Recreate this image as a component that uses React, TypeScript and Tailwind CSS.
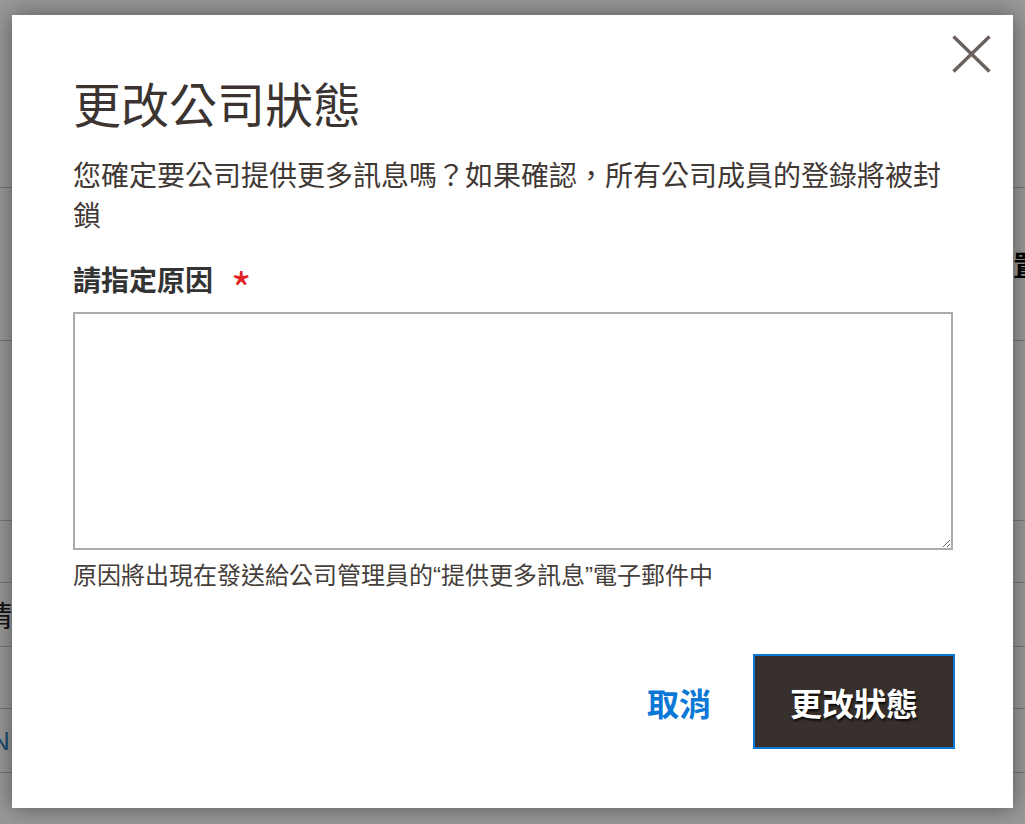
import React from "react";

export default function App() {
  return (
    <div className="relative h-[824px] w-[1025px] overflow-hidden bg-white font-['Noto_Sans_CJK_TC',sans-serif]">
      {/* background page (obscured) */}
      <div className="flex flex-col">
        <div className="h-[188px] border-b border-[#c8c8c8]" />
        <div className="flex h-[153px] items-center justify-end border-b border-[#c8c8c8]">
          <span className="mr-[-16px] text-[28px] font-bold leading-none text-black">設置</span>
        </div>
        <div className="h-[180px] border-b border-[#c8c8c8]" />
        <div className="h-[62px] border-b border-[#c8c8c8]" />
        <div className="flex h-[64px] items-center border-b border-[#c8c8c8]">
          <span className="ml-[-17px] text-[29px] leading-none text-[#222]">請</span>
        </div>
        <div className="h-[62px] border-b border-[#c8c8c8]" />
        <div className="flex h-[64px] items-center border-b border-[#c8c8c8]">
          <span className="ml-[-9px] font-['Liberation_Sans',sans-serif] text-[26px] leading-none text-[#2f84c0]">N</span>
        </div>
        <div className="h-[60px]" />
      </div>

      {/* overlay */}
      <div className="absolute inset-0 bg-black/40 pl-[12px] pt-[15px]">
        <div className="relative flex h-[793px] w-[1001px] flex-col bg-white pl-[61px] pr-[60px] pt-[58px] shadow-[0_0_22px_rgba(0,0,0,0.45)]">
          <button
            type="button"
            aria-label="close"
            className="absolute right-[22px] top-[20px] flex h-[38px] w-[39px] items-center justify-center"
          >
            <svg width="39" height="38" viewBox="0 0 39 38" fill="none">
              <path d="M1.5 1.5 L37.5 36.5 M37.5 1.5 L1.5 36.5" stroke="#6a615c" strokeWidth="3.4" strokeLinecap="butt" />
            </svg>
          </button>

          <h1 className="text-[48px] font-normal leading-[58px] text-[#3b3430]">更改公司狀態</h1>

          <p className="mt-[23px] text-[28px] leading-[40px] text-[#3f3834]">
            您確定要公司提供更多訊息嗎？如果確認，所有公司成員的登錄將被封鎖
          </p>

          <div className="mt-[25px] flex h-[40px] items-center text-[28px] leading-[40px]">
            <span className="font-bold text-[#333333]">請指定原因</span>
            <span className="ml-[18px] translate-y-[8px] text-[44px] leading-[40px] text-[#e02424]">*</span>
          </div>

          <textarea className="mt-[13px] h-[238px] w-[880px] border-2 border-[#ababab] bg-white p-2 text-[24px] outline-none" />

          <p className="mt-[9px] font-['Liberation_Sans','Noto_Sans_CJK_TC',sans-serif] text-[24px] leading-[34px] text-[#453e3a]">
            原因將出現在發送給公司管理員的“提供更多訊息”電子郵件中
          </p>

          <div className="mr-[-2px] mt-[61px] flex items-center justify-end gap-[42px]">
            <button type="button" className="text-[32px] font-bold leading-none text-[#0a78d6]">
              取消
            </button>
            <button
              type="button"
              className="flex h-[95px] w-[202px] items-center justify-center border-2 border-[#0a78d6] bg-[#37302c] text-[32px] font-bold leading-none text-white [text-shadow:1px_2px_2px_rgba(0,0,0,0.8)]"
            >
              更改狀態
            </button>
          </div>
        </div>
      </div>
    </div>
  );
}
